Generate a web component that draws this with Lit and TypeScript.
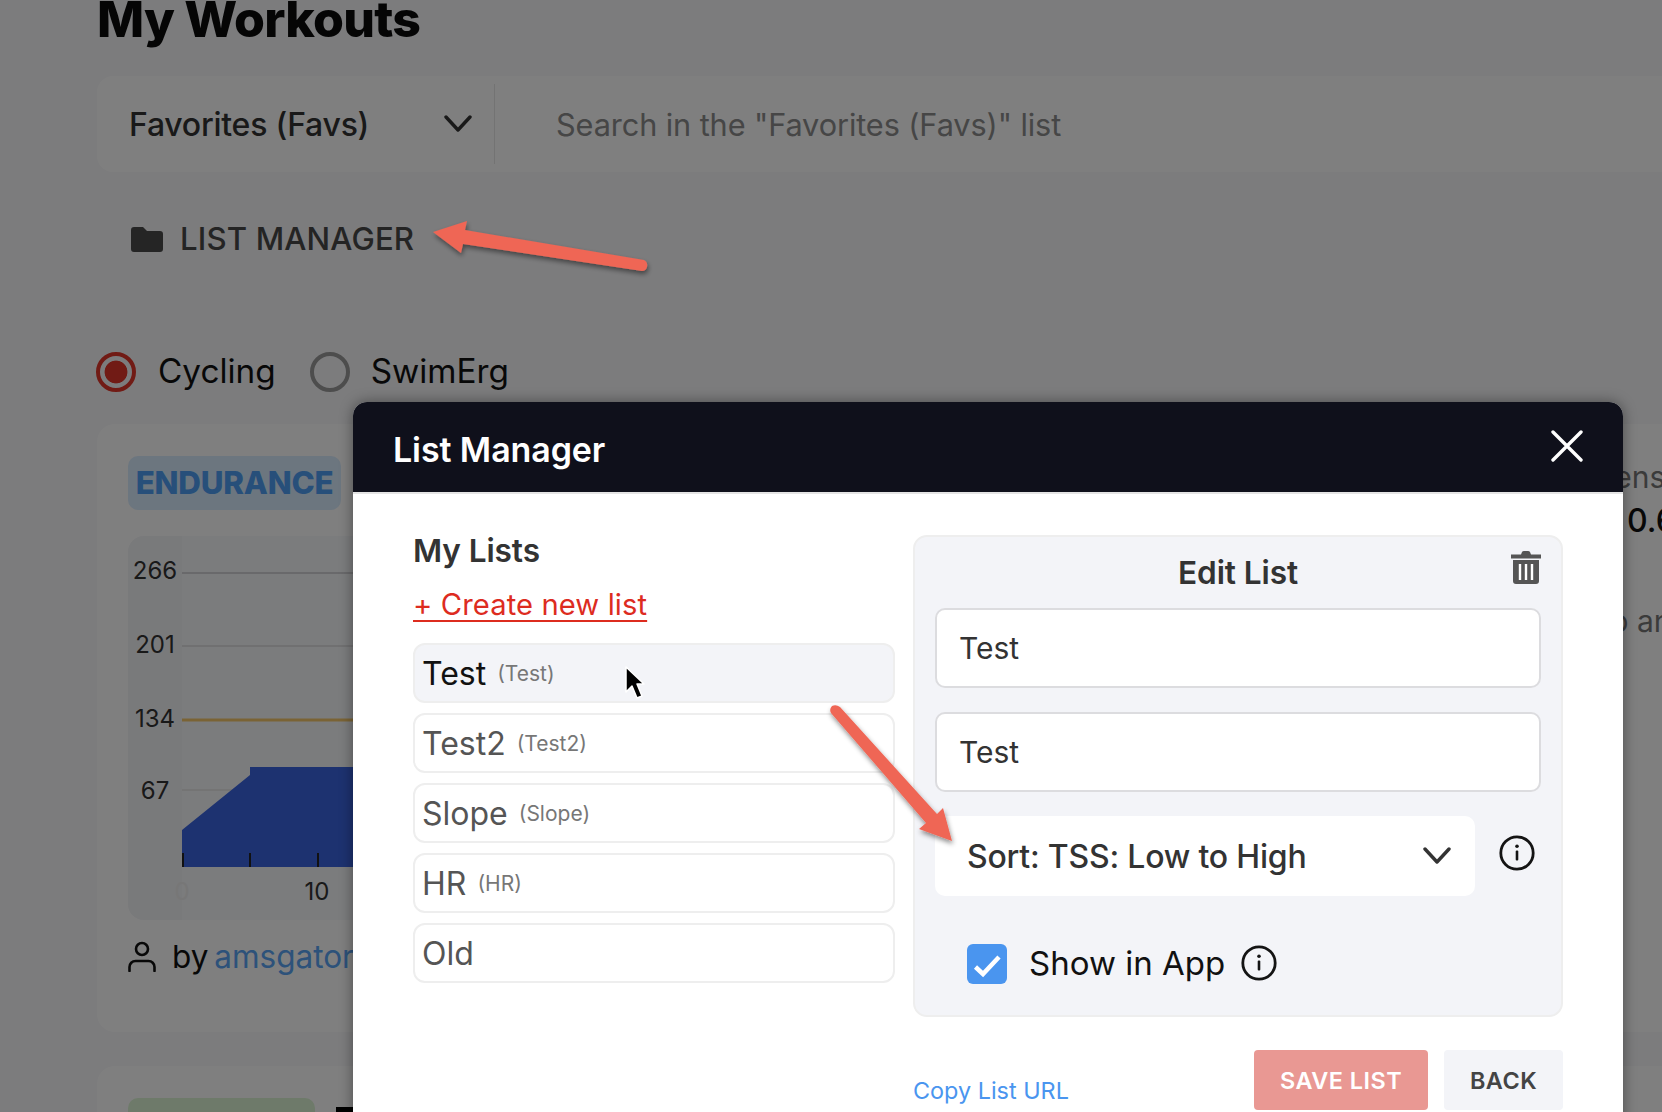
import { LitElement, html, css, svg } from "lit";
import { customElement } from "lit/decorators.js";

const chevron = html`<svg class="chev" viewBox="0 0 28 18"><path d="M2 2 L14 15 L26 2" fill="none" stroke="currentColor" stroke-width="3.4" stroke-linecap="round" stroke-linejoin="round"/></svg>`;
const info = html`<svg class="info" viewBox="0 0 36 36"><circle cx="18" cy="18" r="16.2" fill="none" stroke="#141414" stroke-width="2.8"/><circle cx="18" cy="11.200" r="1.800" fill="#141414"/><rect x="16.700" y="15.400" width="2.600" height="10.200" rx="1" fill="#141414"/></svg>`;

const lists = [
  { name: "Test", code: "(Test)", active: true },
  { name: "Test2", code: "(Test2)" },
  { name: "Slope", code: "(Slope)" },
  { name: "HR", code: "(HR)" },
  { name: "Old", code: "" },
];

@customElement("app-root")
export class AppRoot extends LitElement {
  static styles = css`
    :host { display: block; position: relative; width: 1662px; height: 1112px; overflow: hidden; background: #f8f8fb; font-family: "Inter", "Liberation Sans", sans-serif; color: #0a0a0a; }
    * { box-sizing: border-box; }
    .page { margin-top: -12px; padding-left: 97px; width: 1800px; }
    .title { margin: 0; height: 64px; font-size: 50px; line-height: 62px; font-weight: 800; letter-spacing: -0.75px; color: #0a0a0a; }
    .searchbar { margin-top: 24px; height: 96px; background: #fff; border-radius: 16px; display: flex; align-items: center; }
    .picker { width: 398px; height: 80px; padding: 0 22px 0 32px; border-right: 1px solid #e6e6e6; display: flex; align-items: center; justify-content: space-between; font-size: 32px; font-weight: 500; color: #333; letter-spacing: -0.25px; }
    .chev { width: 28px; height: 18px; color: #333; flex: none; }
    .search { margin-left: 61px; font-size: 30.700px; color: #8c8c8c; letter-spacing: -0.1px; }
    .lm { margin-top: 36px; height: 62px; padding-left: 34px; display: flex; align-items: center; gap: 17px; font-size: 31.200px; font-weight: 500; color: #484848; letter-spacing: 0.15px; }
    .lm svg { width: 32px; height: 25px; }
    .radios { margin: 82px 0 0 -1px; height: 40px; display: flex; align-items: center; font-size: 33.300px; font-weight: 400; color: #111; line-height: 38px; }
    .radios span { margin-top: -2px; }
    .radio { width: 40px; height: 40px; border-radius: 50%; border: 4px solid #9a9a9a; flex: none; margin-right: 22px; }
    .radio.on { border-color: #e2372a; background: radial-gradient(circle, #e2372a 0 11px, transparent 11.800px); }
    .radios span + .radio { margin-left: 34px; margin-right: 21px; }
    .card { margin-top: 32px; height: 608px; width: 1700px; background: #fff; border-radius: 18px; padding: 32px 31px; display: grid; grid-template-columns: 1451px 1fr; }
    .card + .card { margin-top: 34px; }
    .badge { width: 213px; height: 54px; border-radius: 10px; background: #d9ecff; color: #4f9ff5; font-size: 31.300px; font-weight: 800; display: flex; align-items: center; justify-content: center; letter-spacing: -0.2px; }
    .chart { display: block; margin-top: 26px; }
    .chart text { font-family: "Inter", "Liberation Sans", sans-serif; font-size: 24px; fill: #333; }
    .by { margin-top: 16px; display: flex; align-items: center; gap: 16px; font-size: 31.500px; color: #111; height: 40px; }
    .by svg { width: 28px; height: 32px; }
    .by a { color: #5aa5f5; }
    .by span { white-space: nowrap; word-spacing: -3px; }
    .side { font-size: 30px; color: #777; line-height: 40px; padding-top: 1px; white-space: nowrap; }
    .side b { display: block; margin: 4px 0 0 48px; font-weight: 500; font-size: 32px; color: #111; }
    .side i { display: block; margin: 60px 0 0 22px; font-style: normal; color: #777; }
    .badge.green { width: 187px; background: #dcf5d4; }
    .heading { width: 60px; height: 40px; margin: 9px 0 0 21px; background: #000; }
    .second { display: flex; }
    .scrim { position: absolute; inset: 0; background: rgba(0, 0, 0, 0.5); }
    .modal { position: absolute; left: 353px; top: 402px; width: 1270px; height: 800px; background: #fff; border-radius: 14px 14px 0 0; box-shadow: 0 0 14px rgba(0, 0, 0, 0.4); }
    .mhead { height: 92px; background: #0f101b; border-bottom: 2px solid #e4e4e4; border-radius: 14px 14px 0 0; padding: 0 40px; display: flex; align-items: center; justify-content: space-between; color: #fff; font-size: 34px; font-weight: 600; letter-spacing: -0.1px; }
    .mhead span { margin-top: 4px; }
    .mhead svg { width: 32px; height: 32px; margin: -2px 0 0 0; }
    .mbody { padding: 41px 60px 0 60px; display: grid; grid-template-columns: 482px 650px; column-gap: 18px; }
    .h3 { margin: 0; font-size: 31.600px; line-height: 36px; font-weight: 600; color: #333; letter-spacing: -0.1px; }
    .left .h3 { margin-top: -2px; }
    .create { display: block; margin-top: 18px; font-size: 29.200px; line-height: 36px; height: 40px; color: #dd2c1f; text-decoration: underline; text-underline-offset: 5px; text-decoration-thickness: 2px; letter-spacing: 0.1px; }
    .items { margin-top: 16px; display: flex; flex-direction: column; gap: 10px; }
    .item { height: 60px; border: 2px solid #eeeeee; border-radius: 12px; padding: 0 7px; display: flex; align-items: center; gap: 11px; font-size: 32px; color: #555; }
    .item small { font-size: 21px; color: #777; }
    .item.active { background: #f3f4f8; color: #111; }
    .panel { height: 482px; background: #f3f4f8; border: 2px solid #eeeeee; border-radius: 14px; padding: 0 20px; }
    .phead { height: 71px; display: grid; grid-template-columns: 1fr auto 1fr; padding-top: 18px; }
    .phead .h3 { line-height: 36px; }
    .phead svg { justify-self: end; width: 30px; height: 33px; margin-top: -4px; }
    .field { height: 80px; background: #fff; border: 2px solid #dcdcdf; border-radius: 10px; padding: 0 22px; display: flex; align-items: center; font-size: 30px; color: #333; margin-bottom: 24px; }
    .selrow { display: flex; align-items: center; justify-content: space-between; padding-right: 6px; }
    .select { width: 540px; height: 80px; background: #fff; border-radius: 10px; padding: 0 24px 0 32px; display: flex; align-items: center; justify-content: space-between; font-size: 32px; font-weight: 500; color: #333; letter-spacing: -0.2px; }
    .info { width: 36px; height: 36px; flex: none; }
    .selrow .info { margin-top: -6px; }
    .check { margin-top: 47px; padding-left: 32px; display: flex; align-items: center; height: 40px; font-size: 33px; color: #111; }
    .box { width: 40px; height: 40px; border-radius: 6px; background: #4a95ef; margin-right: 22px; flex: none; margin-top: 2px; }
    .check .info { margin-left: 16px; }
    .foot { margin-top: 33px; display: flex; align-items: flex-end; justify-content: space-between; }
    .copy { font-size: 23.400px; line-height: 32px; color: #4a95ef; margin-bottom: 3px; }
    .btns { display: flex; gap: 16px; }
    .btn { height: 60px; border-radius: 4px; font-size: 23.400px; font-weight: 600; display: flex; align-items: center; justify-content: center; letter-spacing: 0.5px; }
    .save { width: 174px; background: #e99893; color: #fff; }
    .back { width: 119px; background: #f3f4f8; color: #444; }
    .marks { position: absolute; left: 0; top: 0; width: 1662px; height: 1112px; pointer-events: none; }
  `;

  private chart() {
    const w = 260;
    const lines = [
      { y: 37, c: "#d2d2d6", l: "266", w: 2, d: 6 },
      { y: 110, c: "#e0e0e2", l: "201", w: 2, d: 7 },
      { y: 184, c: "#f5c76a", l: "134", w: 3, d: 7 },
      { y: 254, c: "#e8e8e8", l: "67", w: 2, d: 9 },
    ];
    return html`<svg class="chart" width=${w} height="384" viewBox="0 0 ${w} 384">
      <path d="M16 0 H${w} V384 H16 A16 16 0 0 1 0 368 V16 A16 16 0 0 1 16 0Z" fill="#f7f8fa"/>
      <path d="M16 0 H54 V384 H16 A16 16 0 0 1 0 368 V16 A16 16 0 0 1 16 0Z" fill="#f3f4f7"/>
      ${lines.map((l) => svg`<line x1="54" x2=${w} y1=${l.y} y2=${l.y} stroke=${l.c} stroke-width=${l.w}/>
        <text x="27" y=${l.y + l.d} text-anchor="middle">${l.l}</text>`)}
      <path d="M54 294 L122 239 V231 H${w} V331 H54Z" fill="#3a64e0"/>
      <path d="M55 317V331M122 317V331M190 317V331" stroke="#222" stroke-width="2"/>
      <text x="54" y="364" text-anchor="middle" style="fill:#eee">0</text>
      <text x="189" y="364" text-anchor="middle">10</text>
    </svg>`;
  }

  render() {
    return html`
      <div class="page">
        <h1 class="title">My Workouts</h1>
        <div class="searchbar">
          <div class="picker"><span>Favorites (Favs)</span>${chevron}</div>
          <div class="search">Search in the "Favorites (Favs)" list</div>
        </div>
        <div class="lm">
          <svg viewBox="0 0 32 25"><path d="M3 0 H12 L16 4 H29 A3 3 0 0 1 32 7 V22 A3 3 0 0 1 29 25 H3 A3 3 0 0 1 0 22 V3 A3 3 0 0 1 3 0Z" fill="#4a4a4a"/></svg>
          <span>LIST MANAGER</span>
        </div>
        <div class="radios">
          <div class="radio on"></div><span>Cycling</span>
          <div class="radio"></div><span>SwimErg</span>
        </div>
        <div class="card">
          <div>
            <div class="badge">ENDURANCE</div>
            ${this.chart()}
            <div class="by">
              <svg viewBox="0 0 28 32"><circle cx="14" cy="9" r="6" fill="none" stroke="#111" stroke-width="2.600"/><path d="M1.500 31 V27 A6 6 0 0 1 7.500 21 H20.500 A6 6 0 0 1 26.500 27 V31" fill="none" stroke="#111" stroke-width="2.600" stroke-linecap="round"/></svg>
              <span>by <a>amsgator</a></span>
            </div>
          </div>
          <div class="side">Intensity<b>0.65</b><i>to an</i></div>
        </div>
        <div class="card">
          <div class="second"><div class="badge green"></div><div class="heading"></div></div>
        </div>
      </div>
      <div class="scrim"></div>
      <div class="modal">
        <div class="mhead">
          <span>List Manager</span>
          <svg viewBox="0 0 32 32"><path d="M2 2 L30 30 M30 2 L2 30" stroke="#fff" stroke-width="3.400" stroke-linecap="round"/></svg>
        </div>
        <div class="mbody">
          <div class="left">
            <h3 class="h3">My Lists</h3>
            <a class="create">+ Create new list</a>
            <div class="items">
              ${lists.map((l) => html`<div class="item ${l.active ? "active" : ""}"><span>${l.name}</span>${l.code ? html`<small>${l.code}</small>` : ""}</div>`)}
            </div>
          </div>
          <div class="right">
            <div class="panel">
              <div class="phead">
                <div></div>
                <h3 class="h3">Edit List</h3>
                <svg viewBox="0 0 30 33"><path d="M0 3.500 H10 L11 1 Q11.500 0 13 0 H17 Q18.500 0 19 1 L20 3.500 H30 V7.500 H0Z M2 9 H28 V30 A3 3 0 0 1 25 33 H5 A3 3 0 0 1 2 30Z" fill="#555"/><path d="M9 13V29M15 13V29M21 13V29" stroke="#fff" stroke-width="2.400"/></svg>
              </div>
              <div class="field">Test</div>
              <div class="field">Test</div>
              <div class="selrow">
                <div class="select"><span>Sort: TSS: Low to High</span>${chevron}</div>
                ${info}
              </div>
              <div class="check">
                <div class="box"><svg viewBox="0 0 40 40"><path d="M8.500 23 L16 30 L32 13" fill="none" stroke="#fff" stroke-width="4.500"/></svg></div>
                <span>Show in App</span>
                ${info}
              </div>
            </div>
            <div class="foot">
              <a class="copy">Copy List URL</a>
              <div class="btns">
                <div class="btn save">SAVE LIST</div>
                <div class="btn back">BACK</div>
              </div>
            </div>
          </div>
        </div>
      </div>
      <svg class="marks" viewBox="0 0 1662 1112">
        <defs><filter id="sh" x="-20%" y="-20%" width="140%" height="140%"><feDropShadow dx="1" dy="3" stdDeviation="2.500" flood-color="#000" flood-opacity="0.45"/></filter></defs>
        <g filter="url(#sh)" fill="#ef6655">
          <path d="M433 232 L467 221 L465 230 L644 260 Q648 262 647 267 Q646 271 642 271 L463 244 L461 253Z"/>
          <path d="M952 841 L919 829 L926 823 L831 713 Q829 709 832 706 Q836 704 840 707 L937 814 L943 808Z"/>
        </g>
        <path d="M626 667 L626 692 L632 686 L637 698 L642 696 L637 684 L644 684Z" fill="#000" stroke="#fff" stroke-width="1.500" stroke-linejoin="round"/>
      </svg>
    `;
  }
}
